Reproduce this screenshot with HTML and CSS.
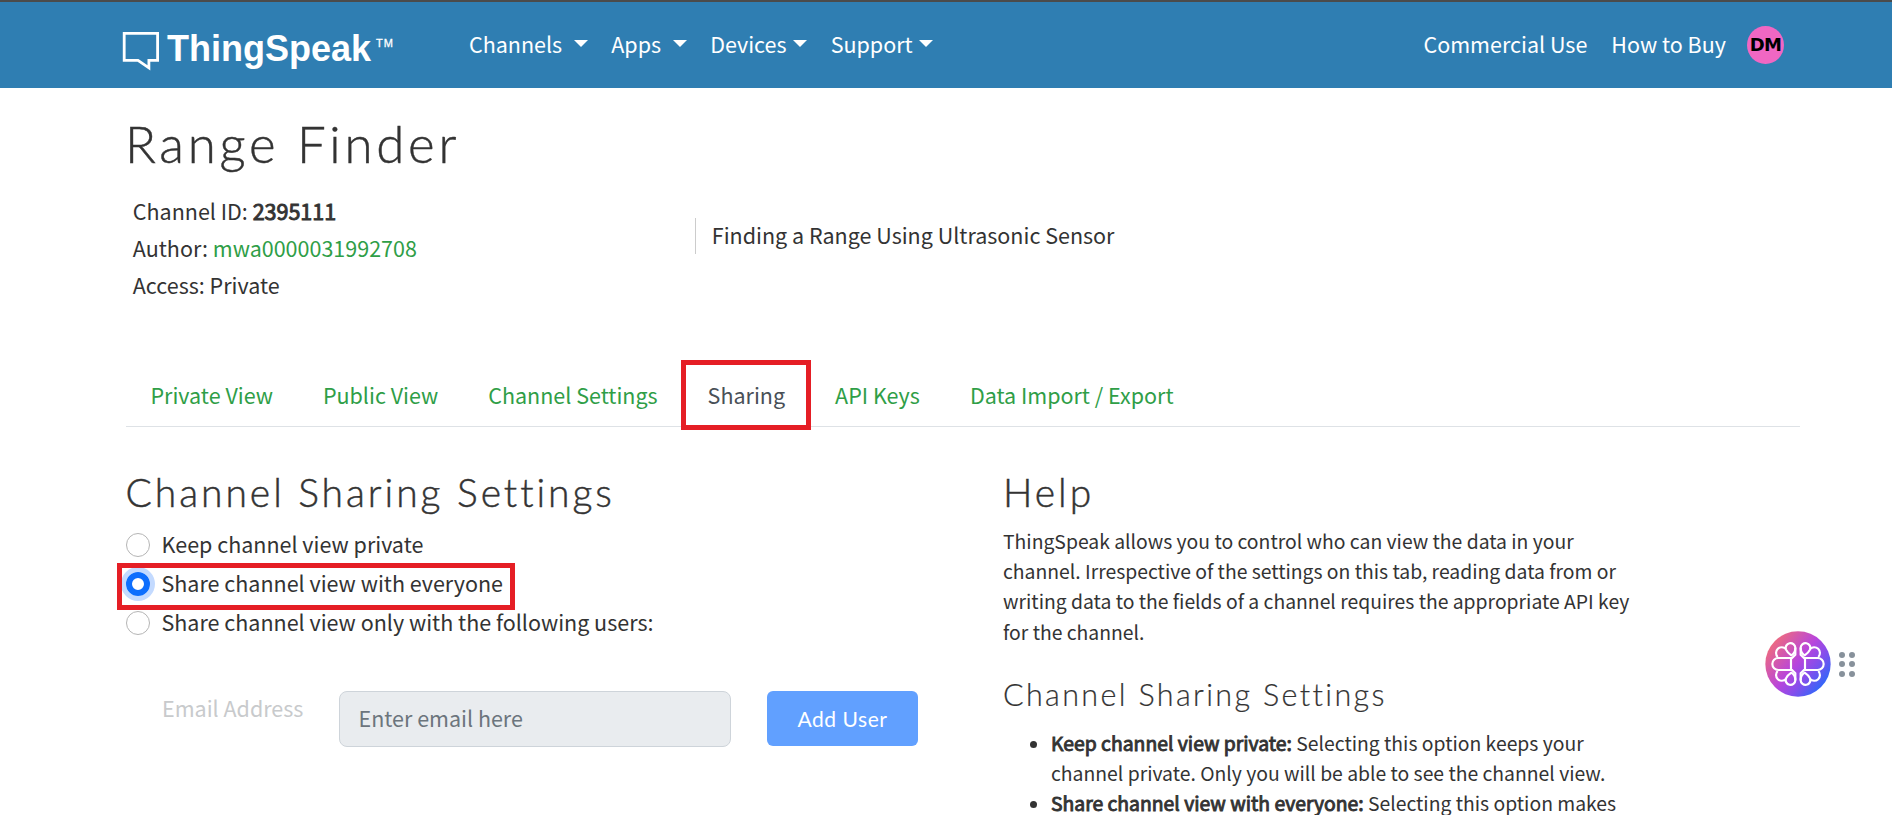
FILE: index.html
```html
<!DOCTYPE html>
<html lang="en">
<head>
<meta charset="utf-8">
<title>Range Finder - ThingSpeak</title>
<link rel="stylesheet" href="styles.css">
</head>
<body>
<header class="topbar">
  <a class="brand">
    <svg class="brand-icon" width="38" height="40" viewBox="0 0 38 40" fill="none" stroke="#fff" stroke-width="2.8"><path d="M2.2 2.4H35.6V29.3H26.900V36.8L16 29.3H2.200Z"/></svg>
    <span class="brand-name">ThingSpeak</span><span class="brand-tm">TM</span>
  </a>
  <nav class="menu">
    <a class="menu-item spaced">Channels<i class="caret"></i></a>
    <a class="menu-item spaced">Apps<i class="caret"></i></a>
    <a class="menu-item">Devices<i class="caret"></i></a>
    <a class="menu-item">Support<i class="caret"></i></a>
  </nav>
  <nav class="menu-right">
    <a>Commercial Use</a>
    <a>How to Buy</a>
    <span class="avatar">DM</span>
  </nav>
</header>

<main class="page">
  <h1>Range Finder</h1>
  <section class="info">
    <div class="meta">
      <div>Channel ID: <strong>2395111</strong></div>
      <div>Author: <a class="link">mwa0000031992708</a></div>
      <div>Access: Private</div>
    </div>
    <div class="description">Finding a Range Using Ultrasonic Sensor</div>
  </section>

  <nav class="tabs">
    <a>Private View</a>
    <a>Public View</a>
    <a>Channel Settings</a>
    <a class="active">Sharing</a>
    <a>API Keys</a>
    <a>Data Import / Export</a>
  </nav>

  <div class="columns">
    <section class="settings">
      <h2>Channel Sharing Settings</h2>
      <label class="option"><span class="radio"></span>Keep channel view private</label>
      <label class="option chosen"><span class="radio on"></span>Share channel view with everyone</label>
      <label class="option"><span class="radio"></span>Share channel view only with the following users:</label>
      <div class="add-user">
        <span class="email-label">Email Address</span>
        <div class="email-input">Enter email here</div>
        <div class="button">Add User</div>
      </div>
    </section>
    <aside class="help">
      <h2>Help</h2>
      <p>ThingSpeak allows you to control who can view the data in your<br>channel. Irrespective of the settings on this tab, reading data from or<br>writing data to the fields of a channel requires the appropriate API key<br>for the channel.</p>
      <h3>Channel Sharing Settings</h3>
      <ul>
        <li><strong>Keep channel view private:</strong> Selecting this option keeps your<br>channel private. Only you will be able to see the channel view.</li>
        <li><strong>Share channel view with everyone:</strong> Selecting this option makes</li>
      </ul>
    </aside>
  </div>
</main>

<div class="assistant">
  <svg width="66" height="66" viewBox="75 63 198 198">
    <defs>
      <linearGradient id="glow" x1="0" y1="0.1" x2="1" y2="0.9">
        <stop offset="0" stop-color="#fb7468"/><stop offset=".48" stop-color="#b845dc"/><stop offset=".68" stop-color="#824fec"/><stop offset="1" stop-color="#0b72ff"/>
      </linearGradient>
      <g id="lobe">
        <path d="M166 113A14.500 14.500 0 1 0 138 119Q142 128 154 136Q166 129 166 113Z"/>
        <path d="M138 117A15 15 0 0 0 113 141M166 113V134L153 147V162M155 144H115A18 18 0 0 0 97 162"/>
      </g>
      <g id="half"><use href="#lobe"/><use href="#lobe" transform="matrix(1 0 0 -1 0 324)"/></g>
    </defs>
    <circle cx="174" cy="162" r="98" fill="url(#glow)"/>
    <g fill="none" stroke="#fff" stroke-width="6.500" stroke-linejoin="round"><use href="#half"/><use href="#half" transform="matrix(-1 0 0 1 348 0)"/></g>
  </svg>
  <span class="grip"><i></i><i></i><i></i><i></i><i></i><i></i></span>
</div>
</body>
</html>
```

FILE: styles.css
```css
*, ::after { box-sizing: border-box; }
html, body { height: 815px; overflow: hidden; }
body {
  margin: 0;
  background: #fff;
  color: #333;
  font: 21.5px/37px "Noto Sans CJK SC", "Noto Sans", sans-serif;
}
h1, h2, h3 { margin: 0; font-family: Lato, sans-serif; font-weight: 300; -webkit-text-stroke: .45px #333; }
h1 { font-size: 51px; line-height: 61px; letter-spacing: 3.75px; margin-bottom: -1px; }
h2 { font-size: 39px; line-height: 48px; letter-spacing: 2.95px; margin-bottom: 8px; }
h3 { font-size: 30.5px; line-height: 36px; letter-spacing: 2.35px; -webkit-text-stroke-width: .2px; }
/* emboldened regular weight, keeps the regular advance widths */
strong { font-weight: 400; -webkit-text-stroke: .9px #333; }
.link { color: #2f9e47; }

.topbar {
  display: flex;
  align-items: flex-start;
  height: 88px;
  padding: 0 108px 0 122px;
  border-top: 2px solid #4b4b4b;
  background: #2f7eb2;
  color: #fff;
}
.brand { display: flex; width: 347px; padding-top: 29px; }
.brand-icon { margin-right: 7px; }
.brand-name { font: bold 36px/40px "Liberation Sans", Arial, sans-serif; margin-top: -2.500px; }
.brand-tm { font: 11px/12px "Liberation Sans", Arial, sans-serif; margin: 6px 0 0 5px; letter-spacing: 1px; -webkit-text-stroke: .3px #fff; }
.menu, .menu-right { display: flex; padding-top: 23px; }
.menu { gap: 23.600px; }
.menu-item { display: flex; align-items: center; }
.caret { margin-left: 6.500px; margin-top: -1px; border: 7px solid transparent; border-top: 7px solid #fff; border-bottom: 0; }
.spaced .caret { margin-left: 11.500px; }
.menu-right { margin-left: auto; gap: 24px; }
.avatar {
  width: 37px; height: 38px; margin: 1px 0 0 -3px;
  border-radius: 50%;
  background: #f067c3; color: #000;
  text-align: center;
  font: bold 18px/38px "DejaVu Sans", Verdana, sans-serif;
  letter-spacing: -.8px;
}

.page { padding: 24.500px 92px 0 126px; }
h1 { margin-left: -1px; }
.info { display: flex; align-items: flex-start; padding: 19.5px 0 0 6.800px; height: 130px; }
.meta { width: 562px; }
.description { margin-top: 26px; height: 36px; line-height: 33px; padding-left: 16px; border-left: 1px solid #ccc; }
.tabs {
  display: flex;
  gap: 50px;
  margin-top: 73.500px;
  padding-left: 24.500px;
  height: 51px;
  border-bottom: 1px solid #dee2e6;
  color: #2f9e47;
}
.active { position: relative; color: #495057; }
.active::after {
  content: "";
  position: absolute;
  left: -27px; top: -16px;
  width: 130px; height: 70px;
  border: 5px solid #e51e25;
}
.columns { display: flex; margin-top: 41px; }
.settings { width: 877px; }
.settings h2 { margin-left: -.500px; }
.option { position: relative; display: flex; align-items: flex-start; width: max-content; line-height: 39px; }
.radio { width: 24px; height: 24px; margin: 9px 11.500px 0 0; border: 1px solid #b5b5b5; border-radius: 50%; }
.radio.on { border: 6.500px solid #0d6efd; box-shadow: 0 0 0 5px #c3daff; }
.chosen::after {
  content: "";
  position: absolute;
  left: -9px; top: 0;
  width: 398px; height: 47px;
  border: 5px solid #e51e25;
}
.add-user { display: flex; align-items: flex-start; margin: 50px 0 0 36px; }
.email-label { width: 177px; line-height: 34px; color: #c8cacc; }
.email-input {
  width: 392px; height: 56px; padding-left: 18.500px;
  border: 1px solid #ced4da; border-radius: 8px;
  background: #e9ecef; color: #6c757d;
  line-height: 52px;
}
.button {
  width: 151px; height: 55px; margin-left: 36px;
  border-radius: 6px;
  background: #61a0ff; color: #fff;
  font: 21px/55px Lato, sans-serif; letter-spacing: .55px; text-align: center;
}
.help { font-size: 19.35px; line-height: 30.2px; white-space: nowrap; }
.help p { margin: 0 0 29.500px; padding-top: 2px; }
.help ul { margin: 15.500px 0 0; padding: 0 0 0 48px; }

.assistant { position: absolute; left: 1765px; top: 631px; display: flex; align-items: center; }
.grip { display: grid; grid-template-columns: 6px 6px; gap: 3.500px; margin-left: 8px; }
.grip i { width: 6px; height: 6px; border-radius: 50%; background: #87919b; }
```
